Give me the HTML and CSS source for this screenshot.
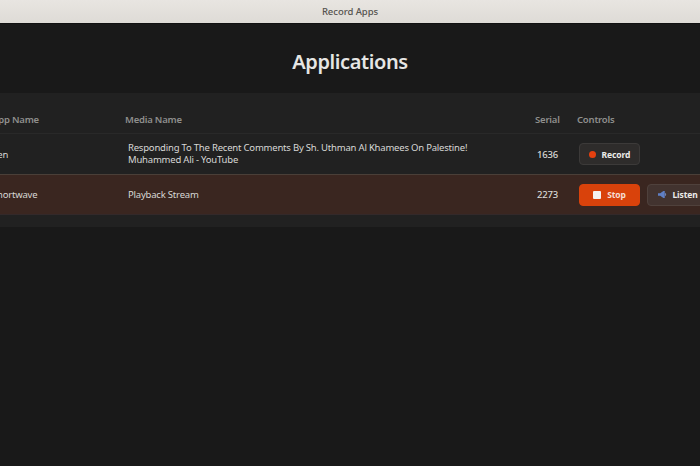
FILE: index.html
```html
<!DOCTYPE html>
<html lang="en">
<head>
<meta charset="utf-8">
<title>Record Apps</title>
<link rel="stylesheet" href="styles.css">
</head>
<body>
<header class="titlebar">Record Apps</header>
<main class="content">
  <h1 class="heading">Applications</h1>
  <section class="panel">
    <div class="row head">
      <div class="app">App Name</div>
      <div class="media">Media Name</div>
      <div class="serial">Serial</div>
      <div class="controls">Controls</div>
    </div>
    <div class="row item first">
      <div class="app">Zen</div>
      <div class="media">Responding To The Recent Comments By Sh. Uthman Al Khamees On Palestine!<br>Muhammed Ali - YouTube</div>
      <div class="serial">1636</div>
      <div class="controls">
        <button class="btn record"><span class="dot"></span>Record</button>
      </div>
    </div>
    <div class="row item active">
      <div class="app">Shortwave</div>
      <div class="media">Playback Stream</div>
      <div class="serial">2273</div>
      <div class="controls">
        <button class="btn stop"><span class="square"></span>Stop</button>
        <button class="btn listen">
          <svg class="speaker" viewBox="0 0 10 10" width="9" height="9"><path d="M0 3.500h2.500L6 1h1.500v8H6L2.500 6.500H0z" fill="#5f7fc4"/><path d="M8 3a2.500 2.500 0 0 1 0 4z" fill="#7d95cc"/></svg>Listen
        </button>
      </div>
    </div>
  </section>
</main>
</body>
</html>
```
FILE: styles.css
```css
* { box-sizing: border-box; }
html, body { margin: 0; height: 100%; overflow: hidden; }
body {
  display: flex;
  flex-direction: column;
  background: #191919;
  color: #e4e4e2;
  font-family: "Noto Sans", "Open Sans", sans-serif;
}
.titlebar {
  height: 24px;
  flex: none;
  display: flex;
  align-items: center;
  justify-content: center;
  background: linear-gradient(#e8e5e1, #dedbd6);
  border-bottom: 1px solid #111;
  color: #55534f;
  font-size: 9.500px;
  font-weight: 500;
  letter-spacing: -0.05px;
}
.content { flex: 1; display: flex; flex-direction: column; }
.heading {
  margin: 0;
  height: 69px;
  padding-top: 24px;
  line-height: 28px;
  text-align: center;
  font-size: 20px;
  font-weight: 600;
  letter-spacing: -0.4px;
  color: #e6e6e4;
}
.panel {
  margin: 0 -40px 0 -30px;
  padding-bottom: 12px;
  background: #212121;
}
.row {
  display: grid;
  grid-template-columns: 133px 410px 42px 1fr;
  align-items: center;
  font-size: 9.500px;
  letter-spacing: -0.2px;
  padding-left: 22px;
}
.head {
  height: 41px;
  padding-top: 12px;
  font-weight: 600;
  color: #8f8f8d;
  border-bottom: 1px solid #292929;
}
.item { color: #d8d8d6; }
.item .media { padding-left: 3px; line-height: 12px; }
.item .serial { text-align: right; padding-right: 19px; margin-left: -30px; font-weight: 500; }
.first { height: 41px; border-bottom: 1px solid #4a3f38; }
.active { height: 40px; background: #3a2620; border-bottom: 1px solid #33292a; }
.controls { display: flex; align-items: center; gap: 7px; }
.item .controls { padding-left: 2px; }
.btn {
  height: 22px;
  width: 61px;
  display: inline-flex;
  align-items: center;
  justify-content: center;
  gap: 6px;
  border: 1px solid #3c3a39;
  border-radius: 4px;
  background: #2e2c2b;
  color: #ecebe9;
  font: 700 8.500px "Noto Sans", "Open Sans", sans-serif;
  letter-spacing: -0.1px;
  padding: 0;
}
.stop { background: #d9420b; border-color: #d9420b; color: #f6ded3; }
.listen { width: 64px; background: #42332f; border-color: #4f413c; gap: 5px; padding-right: 2px; }
.dot { width: 7px; height: 7px; border-radius: 50%; background: #e5400f; }
.square { width: 8px; height: 8px; border-radius: 1px; background: #f5f3f1; }
.speaker { flex: none; }
```
